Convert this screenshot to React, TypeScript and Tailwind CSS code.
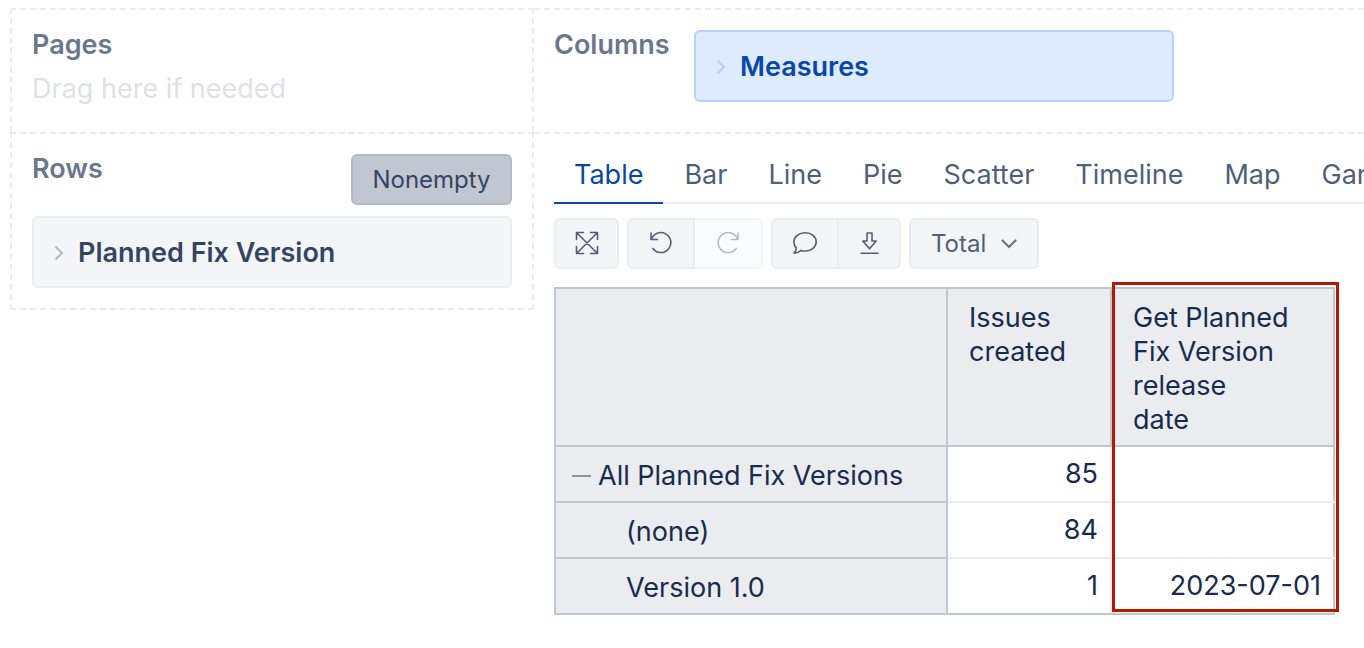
import { useState } from "react";
import type { ReactNode } from "react";
import clsx from "clsx";

const TABS = ["Table", "Bar", "Line", "Pie", "Scatter", "Timeline", "Map", "Gantt"];

const ROWS = [
  { name: "All Planned Fix Versions", issues: "85", date: "", total: true },
  { name: "(none)", issues: "84", date: "", total: false },
  { name: "Version 1.0", issues: "1", date: "2023-07-01", total: false },
];

function Icon({ children }: { children: ReactNode }) {
  return (
    <svg
      className="h-6 w-6"
      viewBox="0 0 24 24"
      fill="none"
      stroke="currentColor"
      strokeWidth="1.6"
      strokeLinecap="round"
      strokeLinejoin="round"
      aria-hidden="true"
    >
      {children}
    </svg>
  );
}

function ToolButton({
  label,
  className,
  disabled,
  children,
}: {
  label: string;
  className?: string;
  disabled?: boolean;
  children: ReactNode;
}) {
  return (
    <button
      aria-label={label}
      disabled={disabled}
      className={clsx(
        "flex h-[51px] items-center justify-center border-2 pb-px",
        disabled
          ? "border-[#f4f5f7] bg-[#fafbfc] text-[#b3bac5]"
          : "border-[#ebecf0] bg-[#f4f5f7] text-[#505f79]",
        className
      )}
    >
      {children}
    </button>
  );
}

function Member({ name, blue }: { name: string; blue?: boolean }) {
  return (
    <button
      className={clsx(
        "flex h-[72px] w-[480px] items-center gap-[14px] rounded-md border-2 px-5 pt-0.5 font-semibold",
        blue
          ? "border-[#b3d4ff] bg-[#deebff] text-[#0747a6]"
          : "border-[#ebecf0] bg-[#f4f5f7] text-[#344563]"
      )}
    >
      <svg
        className={clsx("h-4 w-[10px]", blue ? "text-[#b3d4ff]" : "text-[#b3bac5]")}
        viewBox="0 0 10 16"
        fill="none"
        stroke="currentColor"
        strokeWidth="2"
        aria-hidden="true"
      >
        <path d="M1.5 1.5 8 8l-6.5 6.5" />
      </svg>
      {name}
    </button>
  );
}

export default function App() {
  const [tab, setTab] = useState("Table");

  return (
    <main className="grid grid-cols-[524px_minmax(0,1fr)] items-start overflow-hidden bg-white pt-2 pl-[10px] font-['Inter',sans-serif] text-[27px] leading-[34px] text-[#172b4d]">
      <section className="h-full border-2 border-b-0 border-dashed border-[#ebecf0] px-5 pt-[18px]">
        <h2 className="font-semibold text-[#6b778c]">Pages</h2>
        <p className="mt-[10px] text-[#dfe1e6]">Drag here if needed</p>
      </section>

      <section className="flex gap-6 border-t-2 border-dashed border-[#ebecf0] pt-5 pb-[30px] pl-5">
        <h2 className="-mt-0.5 w-[116px] font-semibold text-[#6b778c]">Columns</h2>
        <Member name="Measures" blue />
      </section>

      <section className="border-2 border-dashed border-[#ebecf0] p-5">
        <div className="flex justify-between">
          <h2 className="-mt-0.5 font-semibold text-[#6b778c]">Rows</h2>
          <button className="h-[51px] w-[161px] rounded-md border-2 border-[#b3bac5] bg-[#c1c7d0] text-2xl text-[#344563]">
            Nonempty
          </button>
        </div>
        <div className="mt-[11px]">
          <Member name="Planned Fix Version" />
        </div>
      </section>

      <section className="min-w-0 border-t-2 border-dashed border-[#ebecf0] pl-5">
        <nav className="flex gap-px overflow-hidden shadow-[inset_0_-2px_0_#ebecf0]">
          {TABS.map((name) => (
            <button
              key={name}
              onClick={() => setTab(name)}
              className={clsx(
                "h-[70px] shrink-0 border-b-2 px-5 pt-[14px]",
                tab === name
                  ? "border-[#0747a6] text-[#0747a6]"
                  : "border-transparent text-[#505f79]"
              )}
            >
              {name}
            </button>
          ))}
        </nav>

        <div className="mt-[14px] flex gap-2">
          <ToolButton label="Full screen" className="w-[65px] rounded-md">
            <Icon>
              <path d="M1.5 1.5l21 21M22.5 1.5l-21 21M1.5 8.500v-7h7M15.5 1.5h7v7M22.5 15.5v7h-7M8.5 22.5h-7v-7" />
            </Icon>
          </ToolButton>
          <div className="flex">
            <ToolButton label="Undo" className="w-[68px] rounded-l-md">
              <Icon>
                <path d="M2 2v6.5h6.5M2.3 8.5A10 10 0 1 1 3.8 17.5" />
              </Icon>
            </ToolButton>
            <ToolButton label="Redo" disabled className="w-[68px] rounded-r-md border-l-0">
              <Icon>
                <path d="M22 2v6.5h-6.5M21.7 8.5A10 10 0 1 0 20.2 17.5" />
              </Icon>
            </ToolButton>
          </div>
          <div className="flex">
            <ToolButton label="Comments" className="w-[68px] rounded-l-md">
              <Icon>
                <path d="M12.3 1.8c6.2 0 10.9 4 10.9 9s-4.7 9.2-10.9 9.2c-1.6 0-3-.2-4.2-.6-1.8 1.7-4 2.7-7.1 2.900 1.500-1.500 2.300-3.200 2.300-5.200C1.700 15.300.9 13.100.9 10.900c0-5.100 5.200-9.100 11.400-9.100z" />
              </Icon>
            </ToolButton>
            <ToolButton label="Export" className="w-[62px] rounded-r-md border-l-0">
              <Icon>
                <path d="M10 2h5v8h4.2L12.500 17.700 5.800 10H10zM4 22.300h17" />
              </Icon>
            </ToolButton>
          </div>
          <div className="relative">
            <select
              aria-label="Total"
              className="h-[51px] w-[130px] appearance-none rounded-md border-2 border-[#ebecf0] bg-[#f4f5f7] pl-5 text-2xl text-[#505f79]"
            >
              <option>Total</option>
            </select>
            <svg
              className="pointer-events-none absolute top-[21px] right-[22px] h-[10px] w-4"
              viewBox="0 0 16 10"
              fill="none"
              stroke="#6b778c"
              strokeWidth="2.2"
              strokeLinecap="round"
              aria-hidden="true"
            >
              <path d="M1.5 1.5 8 8l6.5-6.5" />
            </svg>
          </div>
        </div>

        <div className="relative mt-[18px] w-[781px]">
          <table className="w-full table-fixed border-collapse">
            <colgroup>
              <col className="w-[392px]" />
              <col className="w-[164px]" />
              <col />
            </colgroup>
            <thead className="bg-[#ebecf0]">
              <tr className="h-[158px] text-left align-top">
                <td className="border-2 border-[#c1c7d0]" />
                <th className="border-2 border-[#c1c7d0] px-[21px] pt-3 font-normal">
                  Issues created
                </th>
                <th className="border-2 border-[#c1c7d0] px-[21px] pt-3 font-normal">
                  Get Planned
                  <br />
                  Fix Version
                  <br />
                  release
                  <br />
                  date
                </th>
              </tr>
            </thead>
            <tbody>
              {ROWS.map((row) => (
                <tr key={row.name} className="group h-14">
                  <th className="border-2 border-[#c1c7d0] bg-[#ebecf0] pt-1 text-left font-normal whitespace-nowrap">
                    {row.total ? (
                      <span className="flex items-center gap-[7px] pl-4">
                        <span className="h-0.5 w-[19px] bg-[#8993a4]" />
                        {row.name}
                      </span>
                    ) : (
                      <span className="pl-[70px]">{row.name}</span>
                    )}
                  </th>
                  <td className="border-2 border-[#ebecf0] pr-3 text-right group-last:border-b-[#c1c7d0]">
                    {row.issues}
                  </td>
                  <td className="border-2 border-[#ebecf0] border-r-[#c1c7d0] pr-3 text-right group-last:border-b-[#c1c7d0]">
                    {row.date}
                  </td>
                </tr>
              ))}
            </tbody>
          </table>
          {/* highlight around the release date column */}
          <div className="pointer-events-none absolute -top-[5px] -right-1 bottom-[3px] w-[227px] border-3 border-[#b51a00]" />
        </div>
      </section>
    </main>
  );
}
